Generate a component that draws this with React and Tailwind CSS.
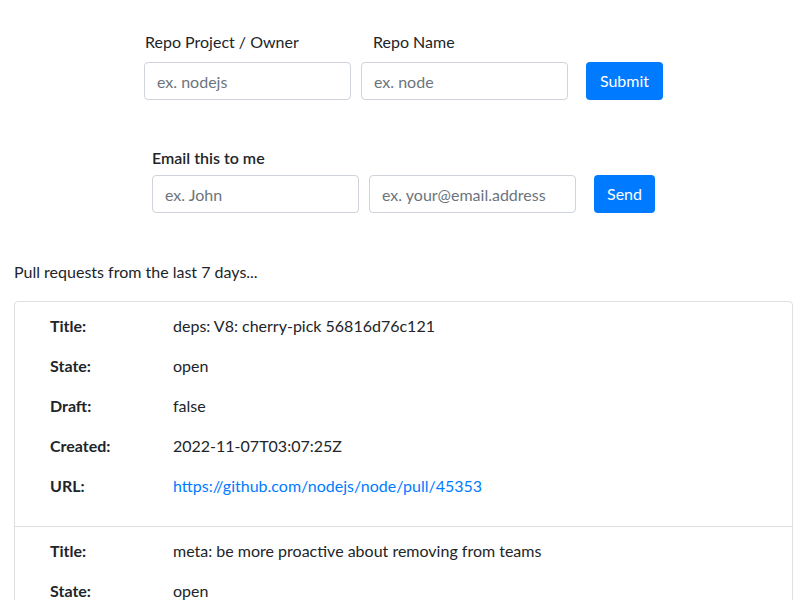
import React from 'react';

const pulls = [
  {
    id: 45353,
    title: 'deps: V8: cherry-pick 56816d76c121',
    state: 'open',
    draft: 'false',
    created: '2022-11-07T03:07:25Z',
    url: 'https://github.com/nodejs/node/pull/45353',
  },
  {
    id: 45352,
    title: 'meta: be more proactive about removing from teams',
    state: 'open',
    draft: 'false',
    created: '2022-11-07T02:41:10Z',
    url: 'https://github.com/nodejs/node/pull/45352',
  },
];

const inputCls =
  'h-[38px] w-[207px] rounded-[4px] border border-[#ced4da] bg-white px-3 text-[16px] text-[#495057] placeholder:text-[#6c757d] outline-none';

const btnCls =
  'h-[38px] rounded-[4px] bg-[#007bff] px-3 text-[16px] text-white';

const Row = ({ label, children }) => (
  <div className="mb-4 flex leading-6">
    <div className="w-[123px] shrink-0 font-bold">{label}</div>
    <div>{children}</div>
  </div>
);

export default function App() {
  return (
    <div
      className="min-h-screen bg-white text-[16px] text-[#212529]"
      style={{ fontFamily: 'Lato, sans-serif' }}
    >
      {/* Repo search */}
      <div className="pt-[30px] pl-[144px]">
        <div className="mb-2 flex leading-6">
          <label className="w-[229px] pl-px">Repo Project / Owner</label>
          <label>Repo Name</label>
        </div>
        <div className="flex items-center">
          <input className={inputCls} placeholder="ex. nodejs" />
          <input className={`${inputCls} ml-[10px]`} placeholder="ex. node" />
          <button className={`${btnCls} ml-[18px] w-[77px]`}>Submit</button>
        </div>
      </div>

      {/* Email form */}
      <div className="pt-[46px] pl-[152px]">
        <div className="mb-[5px] font-semibold leading-6">Email this to me</div>
        <div className="flex items-center">
          <input className={inputCls} placeholder="ex. John" />
          <input className={`${inputCls} ml-[10px]`} placeholder="ex. your@email.address" />
          <button className={`${btnCls} ml-[18px] w-[61px]`}>Send</button>
        </div>
      </div>

      <div className="px-[14px] pt-[47px]">
        <p className="mb-[17px] leading-6">Pull requests from the last 7 days...</p>

        <ul className="w-[779px] rounded-[4px] border border-[#dfdfdf]">
          {pulls.map((pr, i) => (
            <li
              key={pr.id}
              className={`pt-3 pb-3 pl-[35px] ${i > 0 ? 'border-t border-[#dfdfdf]' : ''}`}
            >
              <Row label="Title:">{pr.title}</Row>
              <Row label="State:">{pr.state}</Row>
              <Row label="Draft:">{pr.draft}</Row>
              <Row label="Created:">{pr.created}</Row>
              <Row label="URL:">
                <a href={pr.url} className="text-[#007bff]">
                  {pr.url}
                </a>
              </Row>
            </li>
          ))}
        </ul>
      </div>
    </div>
  );
}
